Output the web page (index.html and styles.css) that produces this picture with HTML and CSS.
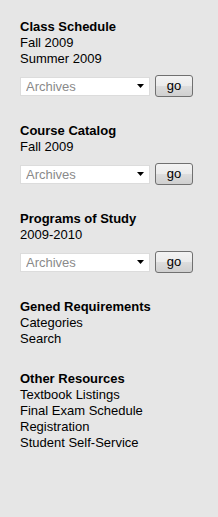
FILE: index.html
```html
<!DOCTYPE html>
<html>
<head>
<meta charset="utf-8">
<link rel="stylesheet" href="styles.css">
</head>
<body>
<div class="sidebar">
  <div class="section">
    <div class="heading">Class Schedule</div>
    <a class="link" href="#">Fall 2009</a>
    <a class="link" href="#">Summer 2009</a>
    <form class="archive">
      <select class="picker"><option>Archives</option></select>
      <button class="go" type="button">go</button>
    </form>
  </div>
  <div class="section">
    <div class="heading">Course Catalog</div>
    <a class="link" href="#">Fall 2009</a>
    <form class="archive">
      <select class="picker"><option>Archives</option></select>
      <button class="go" type="button">go</button>
    </form>
  </div>
  <div class="section">
    <div class="heading">Programs of Study</div>
    <a class="link" href="#">2009-2010</a>
    <form class="archive">
      <select class="picker"><option>Archives</option></select>
      <button class="go" type="button">go</button>
    </form>
  </div>
  <div class="section">
    <div class="heading">Gened Requirements</div>
    <a class="link" href="#">Categories</a>
    <a class="link" href="#">Search</a>
  </div>
  <div class="section">
    <div class="heading">Other Resources</div>
    <a class="link" href="#">Textbook Listings</a>
    <a class="link" href="#">Final Exam Schedule</a>
    <a class="link" href="#">Registration</a>
    <a class="link" href="#">Student Self-Service</a>
  </div>
</div>
</body>
</html>
```
FILE: styles.css
```css
html, body {
  margin: 0;
  padding: 0;
  background: #e6e6e6;
}
body {
  font-family: "Liberation Sans", Arial, sans-serif;
  font-size: 13px;
  line-height: 16px;
  color: #000;
}
.sidebar {
  padding: 19px 0 0 20px;
  display: flex;
  flex-direction: column;
  gap: 24px;
}
.section {
  display: flex;
  flex-direction: column;
}
.heading {
  font-weight: bold;
}
.link {
  color: #000;
  text-decoration: none;
}
.archive {
  margin: 8px 0 0 0;
  display: flex;
  align-items: center;
  gap: 5px;
  height: 22px;
  padding-bottom: 2px;
}
.picker {
  appearance: none;
  -webkit-appearance: none;
  width: 130px;
  height: 19px;
  margin: 0;
  padding: 0 0 0 5px;
  box-sizing: border-box;
  border: 1px solid #dcdcdc;
  border-radius: 0;
  background: #fff url("data:image/svg+xml;utf8,<svg xmlns='http://www.w3.org/2000/svg' width='7' height='4'><path d='M0 0h7L3.5 4z' fill='black'/></svg>") no-repeat right 5px center;
  font-family: "Liberation Sans", Arial, sans-serif;
  font-size: 13px;
  line-height: 17px;
  color: #8a8a8a;
}
.go {
  width: 38px;
  height: 22px;
  margin: 0;
  padding: 0;
  box-sizing: border-box;
  border: 1px solid #707070;
  border-radius: 3px;
  background: linear-gradient(#f3f3f3 0%, #ebebeb 50%, #dddddd 51%, #cfcfcf 100%);
  font-family: "Liberation Sans", Arial, sans-serif;
  font-size: 13px;
  color: #000;
  line-height: 20px;
}
```
